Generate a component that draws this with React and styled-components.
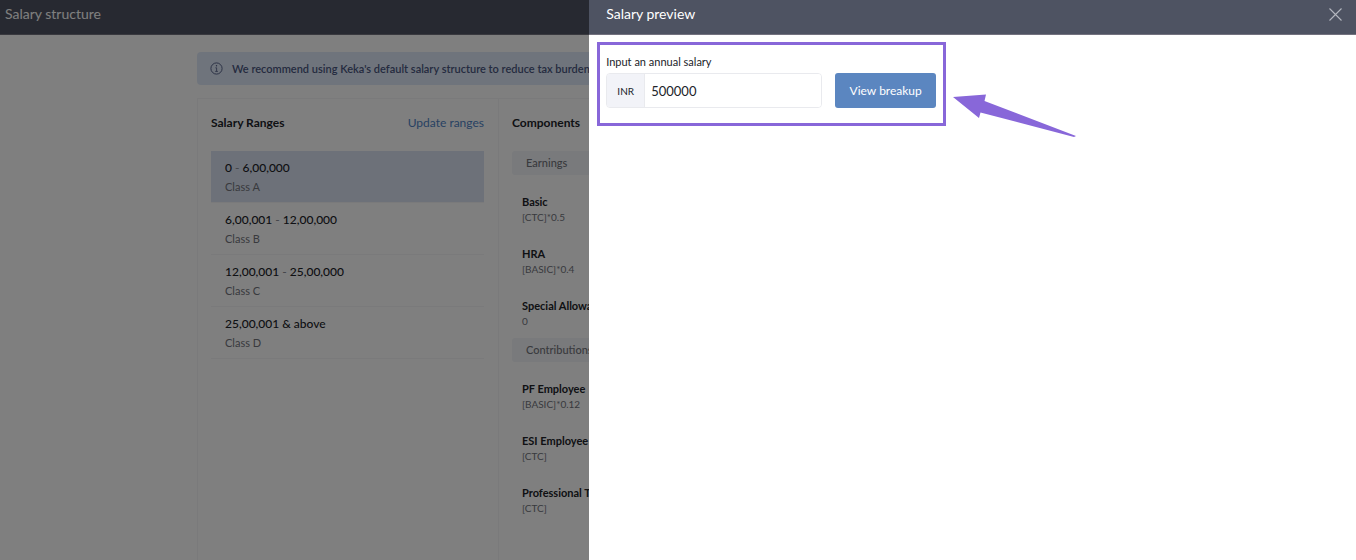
import {useState} from 'react';
import styled, {createGlobalStyle} from 'styled-components';

const GlobalStyle = createGlobalStyle`
  * {
    box-sizing: border-box;
  }

  body {
    margin: 0;
    overflow: hidden;
    background: #fff;
    color: #212329;
    font-family: Lato, "Liberation Sans", sans-serif;
    font-size: 12px;
    line-height: 16px;
  }

  button, input {
    font-family: inherit;
  }

  h1, h2, h3, p, ul {
    margin: 0;
    padding: 0;
  }

  ul {
    list-style: none;
  }
`;

const Page = styled.div`
  min-height: 100vh;
`;

const TopBar = styled.header`
  display: flex;
  align-items: center;
  justify-content: space-between;
  height: 35px;
  padding: 0 14px 6px ${({$indent}) => $indent};
  background: #4e5362;
  border-bottom: 1px solid #73727f;
  color: #fff;
`;

const BarTitle = styled.h1`
  font-size: 14px;
  font-weight: 400;
  line-height: 16px;
`;

const Content = styled.main`
  max-width: 962px;
  margin: 17px auto 0;
`;

const Notice = styled.div`
  display: flex;
  align-items: center;
  gap: 9px;
  height: 33px;
  padding: 0 13px;
  border-radius: 4px;
  background: #dfe9f8;
  color: #4a5680;
  font-size: 11px;
  font-weight: 600;
`;

const Panel = styled.div`
  display: flex;
  height: calc(100vh - 98px);
  margin-top: 13px;
  border: 1px solid #f5f5f7;
  border-bottom: 0;
`;

const RangesColumn = styled.section`
  flex: 0 0 301px;
  padding: 16px 14px 0 13px;
  border-right: 1px solid #f5f5f7;
`;

const ComponentsColumn = styled.section`
  flex: 1;
  padding: 16px 13px 0;
`;

const ColumnHead = styled.div`
  display: flex;
  justify-content: space-between;
  margin-bottom: 20px;
`;

const ColumnTitle = styled.h2`
  font-size: 12px;
  font-weight: 700;
  line-height: 16px;
`;

const TextLink = styled.a`
  color: #4f83c6;
  text-decoration: none;
`;

const RangeRow = styled.li`
  height: 52px;
  padding: 9px 14px;
  border-bottom: 1px solid #f4f4f6;
  background: ${({$active}) => ($active ? '#dae3f2' : 'transparent')};
`;

const RangeName = styled.p`
  margin-bottom: 4px;
  font-weight: 500;

  span {
    color: #8d8f98;
  }
`;

const Muted = styled.p`
  color: #72747c;
  font-size: 11px;
  line-height: 14px;
`;

const GroupTitle = styled.h3`
  height: 24px;
  padding: 0 14px;
  border-radius: 3px;
  background: #f2f4f8;
  color: #72747c;
  font-size: 11px;
  font-weight: 500;
  line-height: 24px;
`;

const ComponentItem = styled.li`
  height: 52px;
  padding: 0 10px;
`;

const ComponentList = styled.ul`
  height: 163px;
  padding-top: 19px;
`;

const ComponentName = styled.p`
  font-size: 11px;
  font-weight: 700;
`;

const Formula = styled(Muted)`
  font-size: 10px;
`;

const Scrim = styled.div`
  position: fixed;
  inset: 0;
  background: rgba(0, 0, 0, 0.5);
`;

const Drawer = styled.aside`
  position: fixed;
  top: 0;
  right: 0;
  bottom: 0;
  width: 56.55%;
  background: #fff;
`;

const CloseButton = styled.button`
  display: flex;
  padding: 0;
  border: 0;
  background: none;
  color: #b4b7bf;
  cursor: pointer;
`;

const SalaryForm = styled.form`
  position: relative;
  display: flex;
  align-items: flex-end;
  gap: 13px;
  width: 349px;
  height: 84px;
  margin: 7px 0 0 8px;
  padding: 0 7px 15px 6px;
  border: 3px solid #8867d9;
`;

const Field = styled.div`
  flex: 1;
  min-width: 0;
`;

const FieldLabel = styled.label`
  display: block;
  margin-bottom: 3px;
  font-size: 11px;
`;

const InputGroup = styled.div`
  display: flex;
  height: 35px;
  overflow: hidden;
  border: 1px solid #e9eaee;
  border-radius: 4px;
`;

const Currency = styled.span`
  flex: 0 0 38px;
  border-right: 1px solid #e9eaee;
  background: #f2f3f8;
  font-size: 10px;
  line-height: 34px;
  text-align: center;
`;

const SalaryInput = styled.input`
  flex: 1;
  min-width: 0;
  padding: 0 6px;
  border: 0;
  outline: 0;
  color: #212329;
  font-size: 13px;
`;

const PrimaryButton = styled.button`
  flex: 0 0 101px;
  height: 35px;
  padding: 0;
  border: 0;
  border-radius: 3px;
  background: #5b86c0;
  color: #fff;
  font-size: 12px;
  cursor: pointer;
`;

const Pointer = styled.svg`
  position: absolute;
  top: 48px;
  left: 352px;
`;

const ranges = [
    {from: '0', to: '6,00,000', name: 'Class A'},
    {from: '6,00,001', to: '12,00,000', name: 'Class B'},
    {from: '12,00,001', to: '25,00,000', name: 'Class C'},
    {from: '25,00,001 & above', name: 'Class D'},
];

const groups = [
    {
        title: 'Earnings',
        items: [
            {name: 'Basic', formula: '[CTC]*0.5'},
            {name: 'HRA', formula: '[BASIC]*0.4'},
            {name: 'Special Allowance', formula: '0'},
        ],
    },
    {
        title: 'Contributions',
        items: [
            {name: 'PF Employee', formula: '[BASIC]*0.12'},
            {name: 'ESI Employee', formula: '[CTC]'},
            {name: 'Professional Tax', formula: '[CTC]'},
        ],
    },
];

const InfoIcon = () => (
    <svg width="13" height="13" viewBox="0 0 13 13" fill="none" stroke="currentColor">
        <circle cx="6.5" cy="6.5" r="5.6" strokeWidth="0.9"/>
        <path d="M5.4 5.8H6.6V9.3M5.2 9.4H7.9" strokeWidth="0.8"/>
        <circle cx="6.5" cy="3.8" r="0.7" fill="currentColor" stroke="none"/>
    </svg>
);

const CloseIcon = () => (
    <svg width="13" height="13" viewBox="0 0 13 13" fill="none" stroke="currentColor" strokeWidth="1.1">
        <path d="M0.5 0.5L12.5 12.5M12.5 0.5L0.5 12.5"/>
    </svg>
);

const SalaryPreview = () => {
    const [salary, setSalary] = useState('500000');

    return (
        <Drawer>
            <TopBar $indent="17px">
                <BarTitle>Salary preview</BarTitle>
                <CloseButton type="button" aria-label="Close"><CloseIcon/></CloseButton>
            </TopBar>
            <SalaryForm onSubmit={(e) => e.preventDefault()}>
                <Field>
                    <FieldLabel htmlFor="salary">Input an annual salary</FieldLabel>
                    <InputGroup>
                        <Currency>INR</Currency>
                        <SalaryInput id="salary" value={salary} onChange={(e) => setSalary(e.target.value)}/>
                    </InputGroup>
                </Field>
                <PrimaryButton type="submit">View breakup</PrimaryButton>
                <Pointer width="126" height="46" viewBox="0 0 126 46">
                    <path d="M1 4L34 1.5L32.5 8L124 43L122 44L28.5 19.5L27 25Z" fill="#8867d9"/>
                </Pointer>
            </SalaryForm>
        </Drawer>
    );
};

const App = () => {
    return (
        <>
            <GlobalStyle/>
            <Page>
                <TopBar $indent="5px">
                    <BarTitle>Salary structure</BarTitle>
                </TopBar>
                <Content>
                    <Notice>
                        <InfoIcon/>
                        <p>We recommend using Keka's default salary structure to reduce tax burden</p>
                    </Notice>
                    <Panel>
                        <RangesColumn>
                            <ColumnHead>
                                <ColumnTitle>Salary Ranges</ColumnTitle>
                                <TextLink href="#ranges">Update ranges</TextLink>
                            </ColumnHead>
                            <ul>
                                {ranges.map((range, i) => (
                                    <RangeRow key={range.name} $active={i === 0}>
                                        <RangeName>
                                            {range.from}{range.to && <span> - </span>}{range.to}
                                        </RangeName>
                                        <Muted>{range.name}</Muted>
                                    </RangeRow>
                                ))}
                            </ul>
                        </RangesColumn>
                        <ComponentsColumn>
                            <ColumnHead>
                                <ColumnTitle>Components</ColumnTitle>
                            </ColumnHead>
                            {groups.map((group) => (
                                <div key={group.title}>
                                    <GroupTitle>{group.title}</GroupTitle>
                                    <ComponentList>
                                        {group.items.map((item) => (
                                            <ComponentItem key={item.name}>
                                                <ComponentName>{item.name}</ComponentName>
                                                <Formula>{item.formula}</Formula>
                                            </ComponentItem>
                                        ))}
                                    </ComponentList>
                                </div>
                            ))}
                        </ComponentsColumn>
                    </Panel>
                </Content>
            </Page>
            <Scrim/>
            <SalaryPreview/>
        </>
    );
};

export default App;
